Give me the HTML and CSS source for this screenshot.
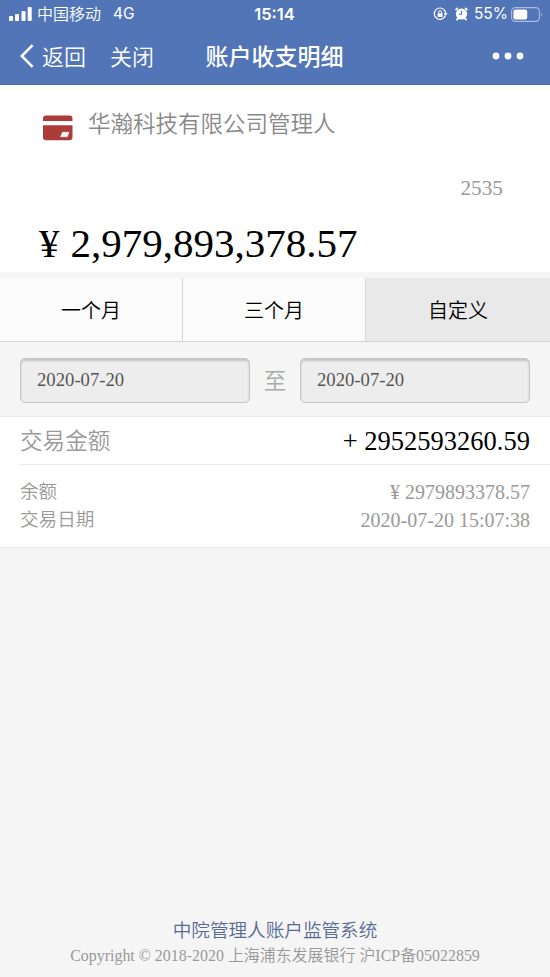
FILE: index.html
```
<!DOCTYPE html>
<html lang="zh-CN">
<head>
    <meta charset="UTF-8">
    <meta name="viewport" content="width=device-width, initial-scale=1.0">
    <title>账户收支明细</title>
    <link rel="stylesheet" href="styles.css">
</head>
<body>
    <header class="top">
        <div class="status">
            <div class="status-left">
                <svg class="signal" width="24" height="15" viewBox="0 0 24 15" fill="#fff">
                    <rect x="0" y="9" width="4" height="5" rx="1"/>
                    <rect x="6" y="7" width="4" height="7" rx="1"/>
                    <rect x="12.5" y="4" width="4" height="10" rx="1"/>
                    <rect x="18.7" y="0" width="4" height="14" rx="1"/>
                </svg>
                <span class="carrier">中国移动</span>
                <span class="network">4G</span>
            </div>
            <div class="clock">15:14</div>
            <div class="status-right">
                <svg class="lock" width="15" height="14" viewBox="0 0 15 14">
                    <path d="M11.8 3.6A5.7 5.7 0 1 0 12.3 8.8M11.8 3.6A5.7 5.7 0 0 1 12.7 6.6" fill="none" stroke="#fff" stroke-width="1.2"/>
                    <path d="M10.6 6.3h4l-2 2.6z" fill="#fff"/>
                    <rect x="4.6" y="6.2" width="5" height="3.8" rx=".5" fill="#fff"/>
                    <path d="M5.6 6.4V5.1a1.5 1.5 0 0 1 3 0v1.3" fill="none" stroke="#fff"/>
                </svg>
                <svg class="alarm" width="13" height="14" viewBox="0 0 13 14">
                    <circle cx="6.5" cy="7" r="5.6" fill="#fff"/>
                    <path d="M1.1 2.6L2.4 1.400M11.900 2.600L10.600 1.400M2.800 11.600L2 12.600M10.200 11.600L11 12.600" stroke="#fff" stroke-width="1.8" stroke-linecap="round"/>
                    <path d="M6.500 3.800V7.300H3.800" fill="none" stroke="#5275b8" stroke-width="1.1"/>
                </svg>
                <span class="percent">55%</span>
                <svg class="battery" width="32" height="15" viewBox="0 0 32 15">
                    <rect x=".6" y=".6" width="27.8" height="13.8" rx="3.8" fill="none" stroke="#a9bbdf" stroke-width="1.1"/>
                    <rect x="2.4" y="2.4" width="13.8" height="10.2" rx="2" fill="#fff"/>
                    <path d="M30 5.2q1.7 2.3 0 4.6z" fill="#a9bbdf"/>
                </svg>
            </div>
        </div>
        <nav class="navbar">
            <div class="nav-left">
                <svg class="chevron" width="14" height="24" viewBox="0 0 14 24">
                    <path d="M12.6 1.200L1.800 12l10.800 10.800" fill="none" stroke="#fff" stroke-width="2.600"/>
                </svg>
                <a class="back">返回</a>
                <a class="close">关闭</a>
            </div>
            <h1>账户收支明细</h1>
            <svg class="more" width="32" height="8" viewBox="0 0 32 8" fill="#fff">
                <circle cx="4" cy="4" r="3.4"/>
                <circle cx="16" cy="4" r="3.4"/>
                <circle cx="28" cy="4" r="3.4"/>
            </svg>
        </nav>
    </header>

    <section class="account">
        <div class="owner">
            <svg class="card" width="30" height="26" viewBox="0 0 30 26">
                <path d="M0 6V3.5A3 3 0 0 1 3 .5h23.500a3 3 0 0 1 3 3V6zM0 10.300h29.500v12a3 3 0 0 1-3 3H3a3 3 0 0 1-3-3z" fill="#ac3c39"/>
                <path d="M19.500 17.200h6.500l-1.700 4.600h-6.800z" fill="#fff" stroke="#fff" stroke-width=".5" stroke-linejoin="round"/>
            </svg>
            <span>华瀚科技有限公司管理人</span>
        </div>
        <div class="tail">2535</div>
        <div class="total"><span class="yen">¥</span>2,979,893,378.57</div>
    </section>

    <div class="tabs">
        <div class="tab">一个月</div>
        <div class="tab">三个月</div>
        <div class="tab active">自定义</div>
    </div>

    <div class="range">
        <div class="date">2020-07-20</div>
        <span class="to">至</span>
        <div class="date">2020-07-20</div>
    </div>

    <section class="record">
        <div class="row amount">
            <span class="label">交易金额</span>
            <span class="value">+ 2952593260.59</span>
        </div>
        <div class="detail">
            <div class="row">
                <span class="label">余额</span>
                <span class="value"><span class="yen">¥</span>2979893378.57</span>
            </div>
            <div class="row">
                <span class="label">交易日期</span>
                <span class="value">2020-07-20 15:07:38</span>
            </div>
        </div>
    </section>

    <footer>
        <div class="system">中院管理人账户监管系统</div>
        <div class="copyright">Copyright © 2018-2020 上海浦东发展银行 沪ICP备05022859</div>
    </footer>
</body>
</html>
```
FILE: styles.css
```
* {
    box-sizing: border-box;
}
body {
    margin: 0;
    height: 977px;
    display: flex;
    flex-direction: column;
    background-color: #f5f5f5;
    color: #000;
    font-family: "Liberation Serif", "Noto Sans CJK SC", serif;
    white-space: nowrap;
    overflow: hidden;
}
svg {
    display: block;
    flex: none;
}

/* status bar + navigation */
.top {
    height: 85px;
    background-color: #5275b8;
    border-bottom: 1px solid #4a6aab;
    color: #fff;
    font-family: Inter, "Noto Sans CJK SC", sans-serif;
}
.status {
    height: 28px;
    padding: 0 7px 0 9px;
    display: grid;
    grid-template-columns: 1fr auto 1fr;
    align-items: center;
    font-size: 16px;
    line-height: 28px;
}
.status-left,
.status-right {
    display: flex;
    align-items: center;
}
.status-right {
    justify-content: flex-end;
}
.carrier {
    margin-left: 4px;
    font-weight: 350;
}
.network {
    margin-left: 12px;
    font-size: 15.5px;
}
.clock {
    padding-right: 3px;
    font-size: 16.5px;
    font-weight: 600;
}
.alarm {
    margin: 0 6px 0 7px;
}
.percent {
    margin-right: 3px;
    font-size: 15.5px;
}
.navbar {
    height: 56px;
    padding: 0 26px 0 20px;
    display: grid;
    grid-template-columns: 1fr auto 1fr;
    align-items: center;
    font-size: 22px;
    font-weight: 350;
}
.nav-left {
    display: flex;
    align-items: center;
}
.back {
    margin-left: 8px;
    padding-bottom: 3px;
}
.close {
    margin-left: 24px;
    padding-bottom: 3px;
}
h1 {
    margin: 0;
    padding: 0 0 3px 5px;
    font-size: 23px;
    font-weight: 500;
}
.more {
    justify-self: end;
    margin-bottom: 1px;
}

/* account summary */
.account {
    height: 187px;
    padding: 20px 47px 0 39px;
    background-color: #fff;
}
.owner {
    height: 36px;
    display: flex;
    align-items: center;
    font-size: 22.5px;
    font-weight: 350;
    color: #888;
}
.owner span {
    padding-bottom: 3px;
}
.card {
    margin: 10px 15px 0 4px;
}
.tail {
    margin-top: 35px;
    line-height: 24px;
    font-size: 21.3px;
    text-align: right;
    color: #999;
}
.total {
    margin-top: 18px;
    line-height: 50px;
    font-size: 41px;
}
.total .yen {
    margin-right: 11px;
}

/* period switch */
.tabs {
    height: 64px;
    margin-top: 6px;
    display: grid;
    grid-template-columns: 183px 183px 1fr;
    border-bottom: 1px solid #d5d5d5;
}
.tab {
    display: flex;
    align-items: center;
    justify-content: center;
    background-color: #fbfbfb;
    border-right: 1px solid #d8d8d8;
    font-size: 20px;
    font-weight: 350;
}
.tab.active {
    background-color: #e9e9e9;
    border-right: none;
}
.range {
    height: 75px;
    padding: 2px 20px 0;
    display: flex;
    align-items: center;
    justify-content: space-between;
    border-bottom: 1px solid #e8e8e8;
}
.date {
    width: 230px;
    height: 45px;
    padding-left: 16px;
    background-color: #ededed;
    border: 1px solid #c4c4c4;
    border-radius: 5px;
    box-shadow: inset 0 2px 2px #c4c4c4;
    font-size: 18.7px;
    line-height: 42px;
    color: #555;
}
.to {
    padding-bottom: 2px;
    font-size: 22.5px;
    font-weight: 350;
    color: #aaa;
}

/* transaction */
.record {
    height: 131px;
    padding-left: 20px;
    background-color: #fff;
    border-bottom: 1px solid #e8e8e8;
}
.row {
    padding-right: 20px;
    display: flex;
    align-items: center;
    justify-content: space-between;
}
.label {
    padding-bottom: 3px;
    font-weight: 350;
    color: #999;
}
.value {
    padding-top: 2px;
}
.amount {
    height: 48px;
    border-bottom: 1px solid #e8e8e8;
    font-size: 26.5px;
}
.amount .label {
    font-size: 22.6px;
}
.detail {
    padding-top: 12px;
    font-size: 20px;
    color: #999;
}
.detail .row {
    height: 28px;
}
.detail .label {
    font-size: 18.6px;
}
.detail .yen {
    margin-right: 5px;
}

footer {
    margin-top: auto;
    padding-bottom: 9px;
    text-align: center;
}
.system {
    font-size: 18.6px;
    font-weight: 350;
    line-height: 26px;
    color: #576b95;
}
.copyright {
    font-size: 15.95px;
    font-weight: 350;
    line-height: 24px;
    color: #999;
}
```
